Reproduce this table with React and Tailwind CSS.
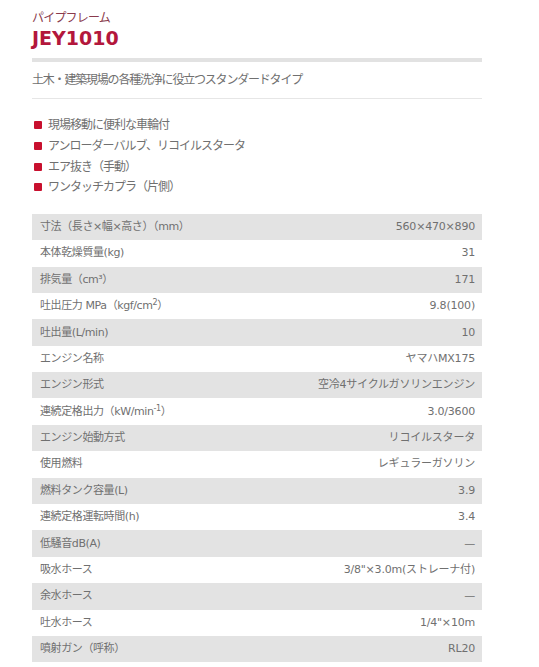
import React from 'react';

const features = [
  '現場移動に便利な車輪付',
  'アンローダーバルブ、リコイルスタータ',
  'エア抜き（手動）',
  'ワンタッチカプラ（片側）',
];

const specs = [
  ['寸法（長さ×幅×高さ）（mm）', '560×470×890'],
  ['本体乾燥質量(kg)', '31'],
  ['排気量（cm³）', '171'],
  [<>吐出圧力 MPa（kgf/cm<sup className="text-[8px]">2</sup>）</>, '9.8(100)'],
  ['吐出量(L/min)', '10'],
  ['エンジン名称', 'ヤマハMX175'],
  ['エンジン形式', '空冷4サイクルガソリンエンジン'],
  [<>連続定格出力（kW/min<sup className="text-[8px]">-1</sup>）</>, '3.0/3600'],
  ['エンジン始動方式', 'リコイルスタータ'],
  ['使用燃料', 'レギュラーガソリン'],
  ['燃料タンク容量(L)', '3.9'],
  ['連続定格運転時間(h)', '3.4'],
  ['低騒音dB(A)', '—'],
  ['吸水ホース', '3/8"×3.0m(ストレーナ付)'],
  ['余水ホース', '—'],
  ['吐水ホース', '1/4"×10m'],
  ['噴射ガン（呼称）', 'RL20'],
];

const SpecRow = ({ label, value, shaded }) => (
  <div className={`flex items-center justify-between h-[26.4px] pl-[8px] pr-[7px] ${shaded ? 'bg-[#e3e3e3]' : 'bg-white'}`}>
    <span className="tracking-[-0.4px]">{label}</span>
    <span className="tracking-[-0.2px]">{value}</span>
  </div>
);

export default function App() {
  return (
    <div
      className="bg-white w-[539px] h-[667px] overflow-hidden text-[#707070]"
      style={{ fontFamily: '"DejaVu Sans", "Noto Sans CJK JP", sans-serif' }}
    >
      <div className="w-[450px] ml-[32px] pt-[10px]">
        <div className="text-[12px] leading-[16px] text-[#8a3a4c] tracking-[-0.8px]">パイプフレーム</div>
        <h1 className="text-[19px] leading-[24px] font-bold text-[#b3173c]">
          JEY1010
        </h1>
        <div className="h-[4px] bg-[#e2e2e2] mt-[8px]" />
        <p className="text-[12px] leading-[16px] tracking-[-1.2px] pt-[10px] pb-[10px] border-b border-[#e6e6e6]">
          土木・建築現場の各種洗浄に役立つスタンダードタイプ
        </p>

        <ul className="pt-[16px] flex flex-col">
          {features.map((f) => (
            <li key={f} className="flex items-center h-[20.7px] text-[12px] tracking-[-1px]">
              <span className="w-[8px] h-[8px] rounded-[1px] bg-[#c8102e] ml-[2px] mr-[6px] shrink-0" />
              {f}
            </li>
          ))}
        </ul>

        <div className="mt-[16px] text-[11px] leading-[14px]">
          {specs.map(([label, value], i) => (
            <SpecRow key={i} label={label} value={value} shaded={i % 2 === 0} />
          ))}
        </div>
      </div>
    </div>
  );
}
